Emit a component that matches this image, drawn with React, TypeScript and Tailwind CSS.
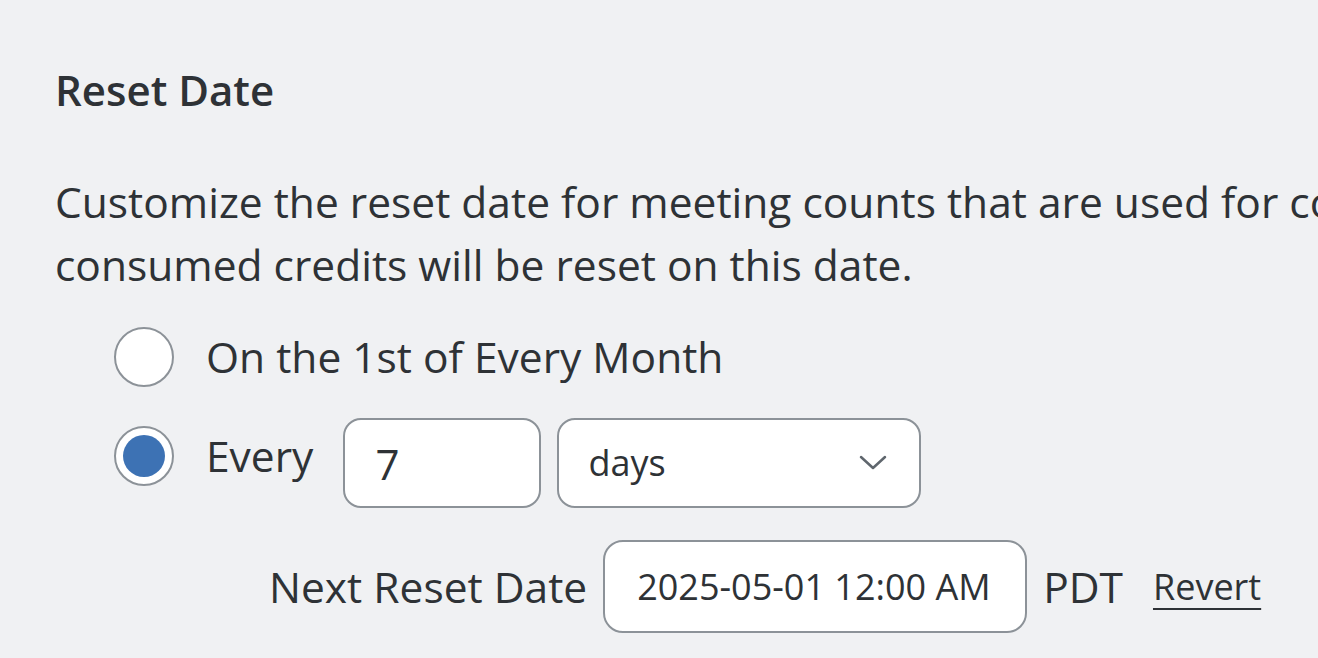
import React from "react";

export default function App() {
  return (
    <div
      className="w-[1318px] h-[658px] overflow-hidden bg-[#f0f1f3] text-[#2e3236]"
      style={{ fontFamily: '"Open Sans", "Noto Sans", sans-serif' }}
    >
      <div className="pl-[55px] pt-[62px]">
        <h2 className="text-[42px] leading-[56px] font-semibold">Reset Date</h2>
        <p className="mt-[52px] text-[42.5px] leading-[63px] whitespace-nowrap">
          Customize the reset date for meeting counts that are used for co
          <br />
          consumed credits will be reset on this date.
        </p>
        <div className="pl-[59px] mt-[30px] flex flex-col">
          <label className="flex items-center h-[62px]">
            <span className="w-[60px] h-[60px] rounded-full border-2 border-[#8c9298] bg-white" />
            <span className="ml-[32px] text-[42.5px] leading-[56px]">On the 1st of Every Month</span>
          </label>
          <div className="flex items-center mt-[16px] h-[104px]">
            <span className="w-[60px] h-[60px] rounded-full border-2 border-[#8c9298] bg-white flex items-center justify-center">
              <span className="w-[42px] h-[42px] rounded-full bg-[#3d72b4]" />
            </span>
            <span className="ml-[32px] text-[42.5px] leading-[56px]">Every</span>
            <div className="ml-[30px] mt-[14px] w-[198px] h-[90px] rounded-[18px] border-2 border-[#8c9298] bg-white flex items-center pl-[30px] text-[42px]">
              7
            </div>
            <div className="ml-[16px] mt-[14px] w-[364px] h-[90px] rounded-[18px] border-2 border-[#8c9298] bg-white flex items-center justify-between pl-[29px] pr-[32px] text-[36px]">
              <span>days</span>
              <svg width="28" height="16" viewBox="0 0 28 16" fill="none">
                <path d="M2 2 L14 13 L26 2" stroke="#5f666d" strokeWidth="2.5" strokeLinecap="round" strokeLinejoin="round" />
              </svg>
            </div>
          </div>
          <div className="flex items-center mt-[32px] pl-[155px] h-[93px]">
            <span className="text-[42.5px] leading-[56px]">Next Reset Date</span>
            <div className="ml-[16px] w-[424px] h-[93px] rounded-[20px] border-2 border-[#8c9298] bg-white flex items-center pl-[32px] text-[36px]">
              2025-05-01 12:00 AM
            </div>
            <span className="ml-[16px] text-[42.5px] leading-[56px]">PDT</span>
            <a className="ml-[30px] text-[36px] leading-[56px] underline underline-offset-[8px] decoration-2">Revert</a>
          </div>
        </div>
      </div>
    </div>
  );
}
